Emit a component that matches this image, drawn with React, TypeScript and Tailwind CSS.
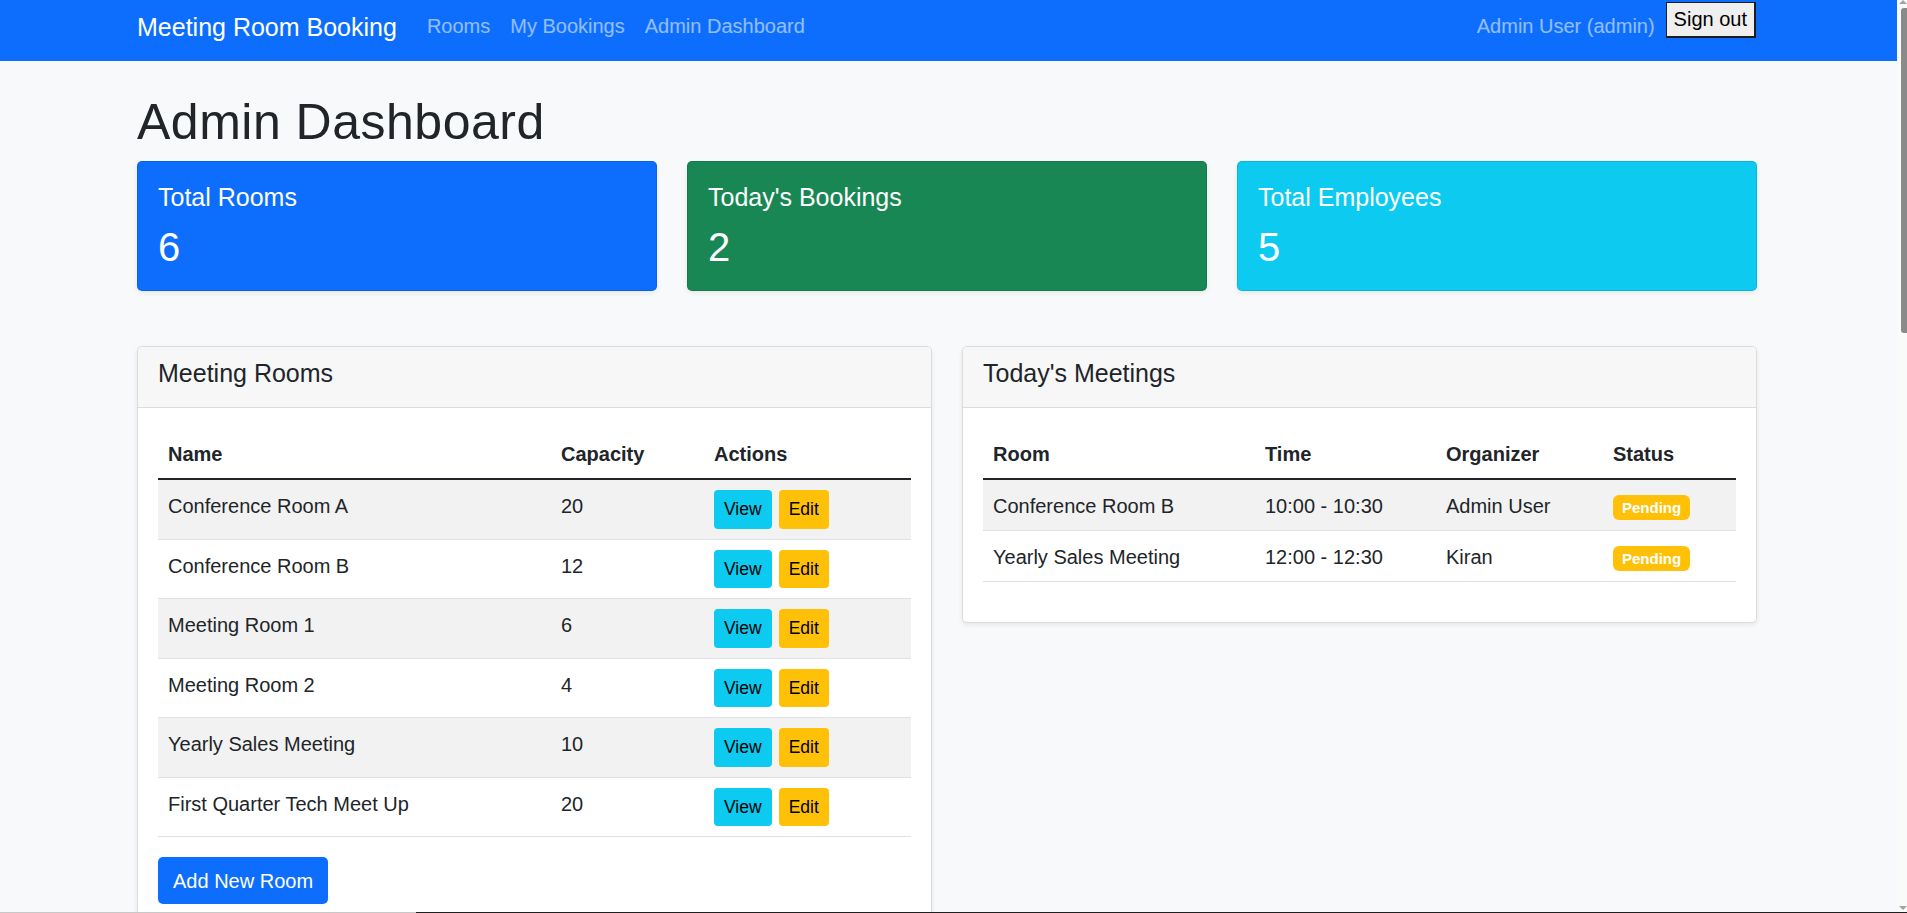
import React from "react";

interface Room {
  name: string;
  capacity: number;
}

interface Meeting {
  room: string;
  time: string;
  organizer: string;
  status: string;
}

const rooms: Room[] = [
  { name: "Conference Room A", capacity: 20 },
  { name: "Conference Room B", capacity: 12 },
  { name: "Meeting Room 1", capacity: 6 },
  { name: "Meeting Room 2", capacity: 4 },
  { name: "Yearly Sales Meeting", capacity: 10 },
  { name: "First Quarter Tech Meet Up", capacity: 20 },
];

const meetings: Meeting[] = [
  { room: "Conference Room B", time: "10:00 - 10:30", organizer: "Admin User", status: "Pending" },
  { room: "Yearly Sales Meeting", time: "12:00 - 12:30", organizer: "Kiran", status: "Pending" },
];

const stats = [
  { title: "Total Rooms", value: 6, bg: "bg-[#0d6efd]" },
  { title: "Today's Bookings", value: 2, bg: "bg-[#198754]" },
  { title: "Total Employees", value: 5, bg: "bg-[#0dcaf0]" },
];

function Navbar() {
  return (
    <nav className="h-[61px] bg-[#0d6efd]">
      <div className="ml-[122px] flex w-[1650px] items-start px-[15px]">
        <a className="mt-[9px] mr-[20px] text-[25px] leading-[37px] text-white">Meeting Room Booking</a>
        <div className="mt-[11px] flex text-[20px] leading-[30px] text-white/55">
          <a className="px-[10px]">Rooms</a>
          <a className="px-[10px]">My Bookings</a>
          <a className="px-[10px]">Admin Dashboard</a>
        </div>
        <div className="ml-auto flex items-start">
          <span className="mt-[11px] mr-[11px] text-[20px] leading-[30px] text-white/55">Admin User (admin)</span>
          <button className="mt-[2px] mr-[1px] border border-r-2 border-b-2 border-[#1c1c1c] bg-[#efefef] px-[7px] py-[5px] text-[20px] leading-[23px] text-black">
            Sign out
          </button>
        </div>
      </div>
    </nav>
  );
}

function StatCard({ title, value, bg }: { title: string; value: number; bg: string }) {
  return (
    <div className={`${bg} h-[130px] rounded-[5px] border border-black/10 p-[20px] text-white shadow-[0_2px_5px_rgba(0,0,0,0.075)]`}>
      <h5 className="mb-[10px] pt-[1px] text-[25px] leading-[29px] font-medium">{title}</h5>
      <h2 className="pt-[2px] text-[40px] leading-[46px] font-medium">{value}</h2>
    </div>
  );
}

function Panel({ title, children }: { title: string; children: React.ReactNode }) {
  return (
    <div className="rounded-[5px] border border-[#dcdcdc] bg-white shadow-[0_2px_5px_rgba(0,0,0,0.075)]">
      <div className="h-[61px] rounded-t-[5px] border-b border-[#dcdcdc] bg-[#f7f7f7] px-[20px] pt-[11px]">
        <h5 className="text-[25px] leading-[30px] font-medium">{title}</h5>
      </div>
      <div className="p-[20px]">{children}</div>
    </div>
  );
}

function Th({ children }: { children: React.ReactNode }) {
  return (
    <th className="border-b-2 border-[#212529] px-[10px] pt-[11px] pb-[9px] text-left text-[20px] leading-[30px] font-bold">
      {children}
    </th>
  );
}

const cell = "border-b border-[#dee2e6] px-[10px] pt-[11px] pb-[9px] align-top leading-[30px]";

function RoomsTable() {
  return (
    <>
      <table className="mb-[20px] w-full table-fixed border-collapse">
        <colgroup>
          <col className="w-[393px]" />
          <col className="w-[153px]" />
          <col />
        </colgroup>
        <thead>
          <tr>
            <Th>Name</Th>
            <Th>Capacity</Th>
            <Th>Actions</Th>
          </tr>
        </thead>
        <tbody>
          {rooms.map((room, i) => (
            <tr key={room.name} className={i % 2 === 0 ? "bg-[#f2f2f2]" : "bg-white"}>
              <td className={cell}>{room.name}</td>
              <td className={cell}>{room.capacity}</td>
              <td className="border-b border-[#dee2e6] p-[10px] align-top">
                <div className="flex gap-[7px]">
                  <button className="h-[38.5px] rounded-[4px] bg-[#0dcaf0] px-[10px] text-[17.5px] text-black">View</button>
                  <button className="h-[38.5px] rounded-[4px] bg-[#ffc107] px-[10px] text-[17.5px] text-black">Edit</button>
                </div>
              </td>
            </tr>
          ))}
        </tbody>
      </table>
      <button className="h-[47px] rounded-[5px] bg-[#0d6efd] px-[15px] text-[20px] text-white">Add New Room</button>
      <div className="h-[300px]" />
    </>
  );
}

function MeetingsTable() {
  return (
    <table className="mb-[20px] w-full table-fixed border-collapse">
      <colgroup>
        <col className="w-[272px]" />
        <col className="w-[181px]" />
        <col className="w-[167px]" />
        <col />
      </colgroup>
      <thead>
        <tr>
          <Th>Room</Th>
          <Th>Time</Th>
          <Th>Organizer</Th>
          <Th>Status</Th>
        </tr>
      </thead>
      <tbody>
        {meetings.map((m, i) => (
          <tr key={m.room} className={i % 2 === 0 ? "bg-[#f2f2f2]" : "bg-white"}>
            <td className={cell}>{m.room}</td>
            <td className={cell}>{m.time}</td>
            <td className={cell}>{m.organizer}</td>
            <td className="border-b border-[#dee2e6] px-[10px] py-[10px] align-top">
              <div className="flex h-[30px] items-start pt-[5px]">
                <span className="flex h-[25px] items-center rounded-[6px] bg-[#ffc107] px-[9px] text-[15px] leading-none font-bold text-white">
                  {m.status}
                </span>
              </div>
            </td>
          </tr>
        ))}
      </tbody>
    </table>
  );
}

function Scrollbar() {
  return (
    <div className="flex w-[10px] flex-col items-end bg-[#fafafa]">
      <div className="h-0 w-0 border-x-[4px] border-b-[4px] border-x-transparent border-b-[#a3a3a3]" />
      <div className="mt-[4px] h-[325px] w-[6px] rounded-l-[3px] bg-[#8a8a8a]" />
      <div className="flex-1" />
      <div className="mb-[2px] h-0 w-0 border-x-[4px] border-t-[4px] border-x-transparent border-t-[#a3a3a3]" />
    </div>
  );
}

export default function App() {
  return (
    <div className="flex h-[913px] flex-col overflow-hidden font-['Liberation_Sans',Arial,sans-serif] text-[20px] text-[#212529]">
      <div className="flex h-[912px]">
        <div className="flex-1 overflow-hidden bg-[#f8f9fa]">
          <Navbar />
          <main className="ml-[122px] w-[1650px] px-[15px] pt-[30px]">
            <h1 className="mb-[10px] pt-[3px] text-[50px] leading-[57px] font-medium tracking-[0.5px]">Admin Dashboard</h1>
            <div className="grid grid-cols-3 gap-[30px]">
              {stats.map((s) => (
                <StatCard key={s.title} {...s} />
              ))}
            </div>
            <div className="mt-[55px] grid grid-cols-2 items-start gap-[30px]">
              <Panel title="Meeting Rooms">
                <RoomsTable />
              </Panel>
              <Panel title="Today's Meetings">
                <MeetingsTable />
              </Panel>
            </div>
          </main>
        </div>
        <Scrollbar />
      </div>
      <div className="flex h-[1px]">
        <div className="w-[416px] bg-[#c8c8c8]" />
        <div className="flex-1 bg-[#1f1f1f]" />
      </div>
    </div>
  );
}
